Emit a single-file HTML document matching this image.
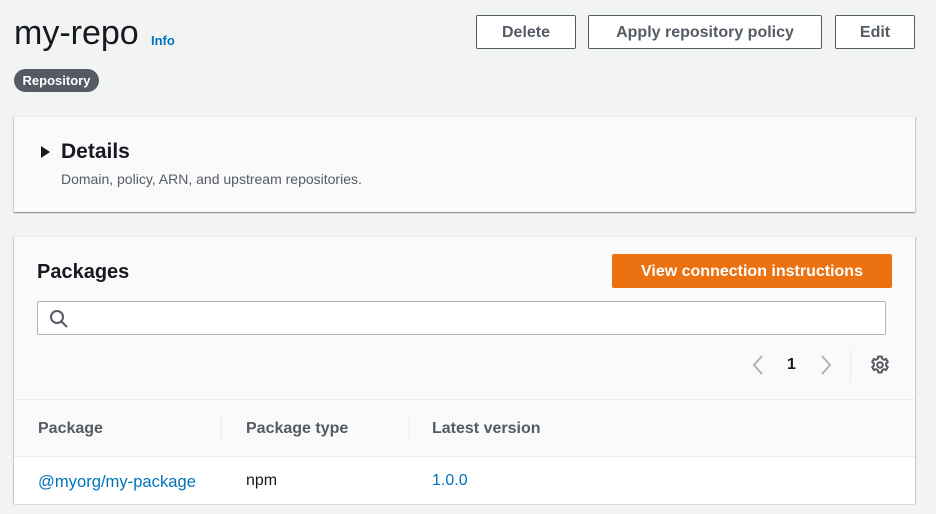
<!DOCTYPE html>
<html><head><style>
*{box-sizing:border-box;margin:0;padding:0}
body{width:936px;height:514px;background:#f2f3f3;font-family:"Liberation Sans",sans-serif;position:relative;overflow:hidden;color:#16191f}
.abs{position:absolute}
.btn{position:absolute;top:15px;height:34px;border:1px solid #545b64;border-radius:2px;background:#fff;font-weight:bold;font-size:16px;color:#545b64;display:flex;align-items:center;justify-content:center;padding-top:2px}
.card{position:absolute;left:14px;width:901px;background:#fafafa;box-shadow:0 1px 1px 0 rgba(0,28,36,.3),1px 1px 1px 0 rgba(0,28,36,.15),-1px 1px 1px 0 rgba(0,28,36,.15);border-top:1px solid #eaeded}
.th{position:absolute;top:420px;font-weight:bold;font-size:16px;color:#545b64}
.sep{position:absolute;top:414px;width:1px;height:28px;background:#eaeded}
</style></head><body>
<div class="abs" style="left:14px;top:13px;font-size:34px;line-height:40px">my-repo</div>
<div class="abs" style="left:151px;top:33px;font-size:13px;font-weight:bold;color:#0073bb">Info</div>
<div class="abs" style="left:14px;top:69px;width:85px;height:23px;border-radius:12px;background:#545b64;color:#fff;font-size:13px;font-weight:bold;display:flex;align-items:center;justify-content:center">Repository</div>
<div class="btn" style="left:476px;width:100px">Delete</div>
<div class="btn" style="left:588px;width:234px">Apply repository policy</div>
<div class="btn" style="left:835px;width:80px">Edit</div>

<div class="card" style="top:116px;height:96px">
<svg class="abs" style="left:26px;top:29px" width="10" height="12"><path d="M1 0L10 6L1 12Z" fill="#16191f"/></svg>
<div class="abs" style="left:47px;top:23px;font-size:21px;font-weight:bold">Details</div>
<div class="abs" style="left:47px;top:54px;font-size:14px;color:#545b64">Domain, policy, ARN, and upstream repositories.</div>
</div>

<div class="card" style="top:236px;height:267px">
<div class="abs" style="left:23px;top:24px;font-size:20px;font-weight:bold">Packages</div>
<div class="abs" style="left:598px;top:17px;width:280px;height:34px;background:#ec7211;border-radius:2px;color:#fff;font-weight:bold;font-size:16px;display:flex;align-items:center;justify-content:center;padding-top:1px">View connection instructions</div>
<div class="abs" style="left:23px;top:64px;width:849px;height:34px;background:#fff;border:1px solid #aab7b8;border-radius:2px">
<svg class="abs" style="left:11px;top:7px" width="20" height="20" fill="none" stroke="#545b64" stroke-width="2"><circle cx="8" cy="8" r="6"/><path d="M12.5 12.5L18 18"/></svg>
</div>
<svg class="abs" style="left:737px;top:118px" width="14" height="20" fill="none" stroke="#aab7b8" stroke-width="2"><path d="M11 1L3 10L11 19"/></svg>
<div class="abs" style="left:773px;top:119px;font-size:16px;font-weight:bold">1</div>
<svg class="abs" style="left:805px;top:118px" width="14" height="20" fill="none" stroke="#aab7b8" stroke-width="2"><path d="M3 1L11 10L3 19"/></svg>
<div class="abs" style="left:836px;top:111px;width:1px;height:34px;background:#eaeded"></div>
<svg class="abs" style="left:856px;top:118px" width="20" height="20" viewBox="0 0 20 20" fill="none" stroke="#545b64" stroke-width="2"><path d="M8.3 1.5h3.4l.5 2.3 1.7 1 2.2-.8 1.7 2.9-1.7 1.6v2l1.7 1.6-1.7 2.9-2.2-.8-1.7 1-.5 2.3H8.3l-.5-2.3-1.7-1-2.2.8-1.7-2.9 1.7-1.6v-2L2.2 6.9l1.7-2.9 2.2.8 1.7-1z" stroke-linejoin="round"/><circle cx="10" cy="10" r="2.8"/></svg>
<div class="abs" style="left:0;top:162px;width:901px;height:1px;background:#eaeded"></div>
<div class="abs" style="left:0;top:219px;width:901px;height:48px;background:#fff;border-top:1px solid #eaeded"></div>
</div>
<div class="th" style="left:38px">Package</div>
<div class="sep" style="left:221px"></div>
<div class="th" style="left:246px">Package type</div>
<div class="sep" style="left:409px"></div>
<div class="th" style="left:432px">Latest version</div>
<div class="abs" style="left:38px;top:472px;font-size:16.6px;color:#0073bb">@myorg/my-package</div>
<div class="abs" style="left:246px;top:472px;font-size:16px">npm</div>
<div class="abs" style="left:432px;top:472px;font-size:16px;color:#0073bb">1.0.0</div>
</body></html>
